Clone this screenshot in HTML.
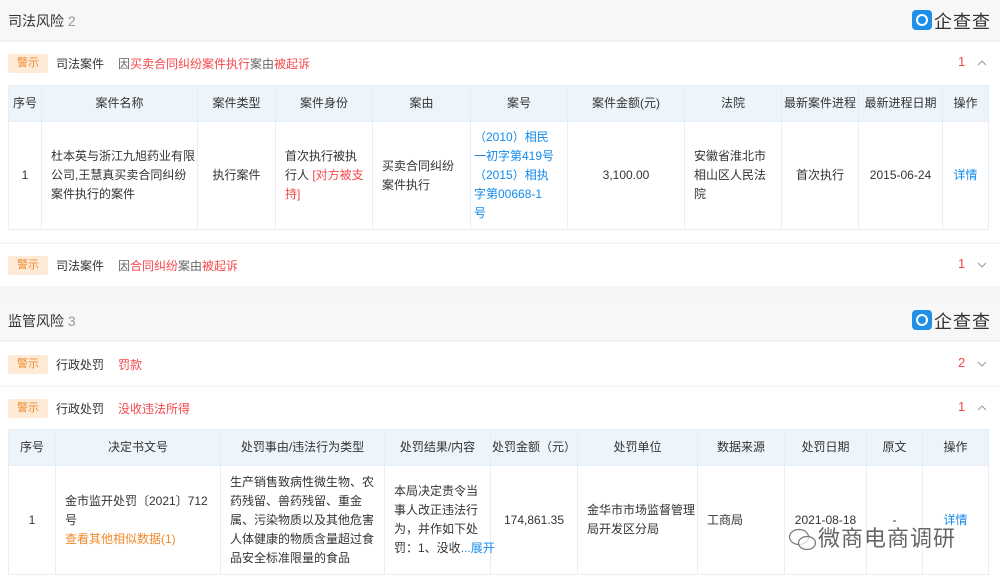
<!DOCTYPE html>
<html><head><meta charset="utf-8">
<style>
*{margin:0;padding:0;box-sizing:border-box}
body{width:1000px;height:583px;overflow:hidden;background:#f5f6f8;font-family:"Liberation Sans","Noto Sans CJK SC",sans-serif;font-size:12px;color:#333;position:relative}
.a{position:absolute}
.hdr{background:#f7f7f7;left:0;width:1000px;height:41px;border-bottom:1px solid #eee}
.hdr .t{position:absolute;left:8px;top:11px;font-size:14px;color:#333}
.hdr .t span{color:#999}
.logo{position:absolute;left:912px;top:10px}
.logo i{position:absolute;left:0;top:0;width:20px;height:20px;background:#1f8fe8;border-radius:4px}
.logo i:after{content:"";position:absolute;left:4px;top:4px;width:8px;height:8px;border:2px solid #fff;border-radius:50%}
.logo b{position:absolute;left:22px;top:-2px;font-weight:normal;font-size:18px;color:#333;white-space:nowrap;letter-spacing:1px}
.card{background:#fff;left:0;width:1000px}
.row{position:absolute;left:0;width:1000px;height:40px}
.tag{position:absolute;left:8px;top:11px;width:40px;height:19px;background:#fdebd8;color:#f08a2c;font-size:11px;text-align:center;line-height:19px;border-radius:2px}
.k{position:absolute;left:56px;top:12px;color:#333}
.r{color:#f5474b}
.d{position:absolute;left:118px;top:12px;color:#666}
.n{position:absolute;left:958px;top:11px;color:#f5474b;font-size:13px}
.ch{position:absolute;left:976px;top:14px;width:12px;height:12px}
table{position:absolute;border-collapse:collapse;table-layout:fixed;left:8px}
td,th{border:1px solid #e8eef5;text-align:center;vertical-align:middle;font-weight:normal;color:#333;font-size:12px;line-height:19px;white-space:nowrap}
th{background:#edf5fb;height:36px}
td.l{text-align:left;padding:0 9px}
.b{color:#128bed}
.o{color:#f08a2c}
</style></head><body>

<div class="a hdr" style="top:0"><div class="t">司法风险 <span>2</span></div>
<div class="logo"><i></i><b>企查查</b></div></div>

<div class="a card" style="top:42px;height:200px">
<div class="row" style="top:1px"><div class="tag">警示</div><div class="k">司法案件</div><div class="d">因<span class="r">买卖合同纠纷案件执行</span>案由<span class="r">被起诉</span></div><div class="n">1</div>
<svg class="ch" viewBox="0 0 12 12"><path d="M2 8 L6 4 L10 8" fill="none" stroke="#999" stroke-width="1"/></svg></div>
<table style="top:43px;width:980px">
<colgroup><col style="width:33px"><col style="width:156px"><col style="width:78px"><col style="width:97px"><col style="width:98px"><col style="width:97px"><col style="width:117px"><col style="width:97px"><col style="width:77px"><col style="width:84px"><col style="width:46px"></colgroup>
<tr><th>序号</th><th>案件名称</th><th>案件类型</th><th>案件身份</th><th>案由</th><th>案号</th><th>案件金额(元)</th><th>法院</th><th>最新案件进程</th><th>最新进程日期</th><th>操作</th></tr>
<tr style="height:108px"><td>1</td><td class="l">杜本英与浙江九旭药业有限<br>公司,王慧真买卖合同纠纷<br>案件执行的案件</td><td>执行案件</td><td class="l">首次执行被执<br>行人 <span class="r">[对方被支<br>持]</span></td><td class="l">买卖合同纠纷<br>案件执行</td><td class="l b" style="padding-left:3px">（2010）相民<br>一初字第419号<br>（2015）相执<br>字第00668-1<br>号</td><td>3,100.00</td><td class="l">安徽省淮北市<br>相山区人民法<br>院</td><td>首次执行</td><td>2015-06-24</td><td class="b">详情</td></tr>
</table>
</div>

<div class="a card" style="top:244px;height:42px">
<div class="row" style="top:1px"><div class="tag">警示</div><div class="k">司法案件</div><div class="d">因<span class="r">合同纠纷</span>案由<span class="r">被起诉</span></div><div class="n">1</div>
<svg class="ch" viewBox="0 0 12 12"><path d="M2 4 L6 8 L10 4" fill="none" stroke="#999" stroke-width="1"/></svg></div>
</div>

<div class="a hdr" style="top:300px"><div class="t">监管风险 <span>3</span></div>
<div class="logo"><i></i><b>企查查</b></div></div>

<div class="a card" style="top:342px;height:43px">
<div class="row" style="top:2px"><div class="tag">警示</div><div class="k">行政处罚</div><div class="d" style="left:118px"><span class="r">罚款</span></div><div class="n">2</div>
<svg class="ch" viewBox="0 0 12 12"><path d="M2 4 L6 8 L10 4" fill="none" stroke="#999" stroke-width="1"/></svg></div>
</div>

<div class="a card" style="top:387px;height:196px">
<div class="row" style="top:1px"><div class="tag">警示</div><div class="k">行政处罚</div><div class="d" style="left:118px"><span class="r">没收违法所得</span></div><div class="n">1</div>
<svg class="ch" viewBox="0 0 12 12"><path d="M2 8 L6 4 L10 8" fill="none" stroke="#999" stroke-width="1"/></svg></div>
<table style="top:42px;width:980px">
<colgroup><col style="width:47px"><col style="width:165px"><col style="width:164px"><col style="width:106px"><col style="width:87px"><col style="width:120px"><col style="width:87px"><col style="width:82px"><col style="width:56px"><col style="width:66px"></colgroup>
<tr><th>序号</th><th>决定书文号</th><th>处罚事由/违法行为类型</th><th>处罚结果/内容</th><th>处罚金额（元）</th><th>处罚单位</th><th>数据来源</th><th>处罚日期</th><th>原文</th><th>操作</th></tr>
<tr style="height:109px"><td>1</td><td class="l">金市监开处罚〔2021〕712<br>号<br><span class="o">查看其他相似数据(1)</span></td><td class="l">生产销售致病性微生物、农<br>药残留、兽药残留、重金<br>属、污染物质以及其他危害<br>人体健康的物质含量超过食<br>品安全标准限量的食品</td><td class="l">本局决定责令当<br>事人改正违法行<br>为，并作如下处<br>罚：1、没收<span class="b">...展开</span></td><td>174,861.35</td><td class="l">金华市市场监督管理<br>局开发区分局</td><td class="l">工商局</td><td>2021-08-18</td><td>-</td><td class="b">详情</td></tr>
</table>
</div>

<svg class="a" style="left:788px;top:527px" width="30" height="26" viewBox="0 0 30 26"><ellipse cx="11" cy="10" rx="9.5" ry="7.5" fill="none" stroke="#777" stroke-width="1.2"/><ellipse cx="19" cy="16" rx="8.5" ry="6.5" fill="rgba(255,255,255,.7)" stroke="#777" stroke-width="1.2"/></svg>
<div class="a" style="left:818px;top:521px;font-size:22px;color:#666;letter-spacing:1px;text-shadow:0 0 2px #fff">微商电商调研</div>
</body></html>
